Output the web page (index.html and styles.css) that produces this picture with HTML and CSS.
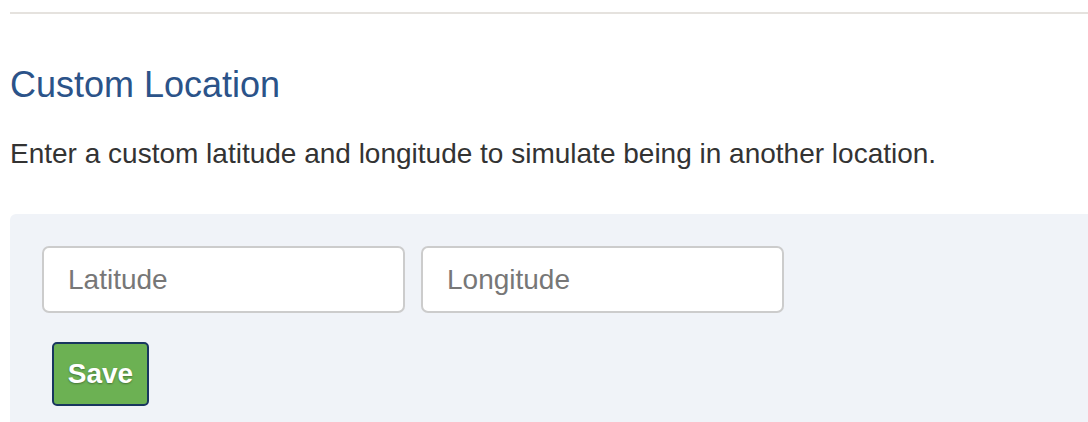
FILE: index.html
```html
<!DOCTYPE html>
<html>
<head>
<meta charset="utf-8">
<link rel="stylesheet" href="styles.css">
</head>
<body>
<div class="page">
  <hr class="rule">
  <h2 class="title">Custom Location</h2>
  <p class="lead">Enter a custom latitude and longitude to simulate being in another location.</p>
  <div class="panel">
    <div class="fields">
      <input class="field" type="text" placeholder="Latitude">
      <input class="field" type="text" placeholder="Longitude">
    </div>
    <button class="save" type="button">Save</button>
  </div>
</div>
</body>
</html>
```
FILE: styles.css
```css
html, body {
  margin: 0;
  padding: 0;
  background: #ffffff;
  font-family: "Liberation Sans", Arial, sans-serif;
}
.page {
  padding: 12px 0 0 10px;
  height: 410px;
  overflow: hidden;
}
.rule {
  margin: 0;
  border: 0;
  height: 2px;
  background: #e5e2de;
}
.title {
  margin: 51px 0 0;
  font-size: 36px;
  line-height: 40px;
  font-weight: normal;
  color: #2b5389;
}
.lead {
  margin: 29px 0 0;
  font-size: 28px;
  line-height: 40px;
  color: #333333;
}
.panel {
  margin-top: 40px;
  background: #f0f3f8;
  border-top-left-radius: 6px;
  padding: 32px 0 40px 32px;
  min-height: 200px;
}
.fields {
  display: flex;
  gap: 16px;
}
.field {
  box-sizing: border-box;
  width: 363px;
  height: 67px;
  margin: 0;
  border: 2px solid #cccccc;
  border-radius: 7px;
  background: #ffffff;
  padding: 0 24px;
  font-family: "Liberation Sans", Arial, sans-serif;
  font-size: 28px;
  color: #333333;
  outline: none;
}
.field::placeholder {
  color: #777777;
  opacity: 1;
}
.save {
  box-sizing: border-box;
  display: block;
  margin: 29px 0 0 10px;
  width: 97px;
  height: 64px;
  padding: 0;
  background: #6cb153;
  border: 2px solid #19365f;
  border-radius: 5px;
  color: #ffffff;
  font-family: "Liberation Sans", Arial, sans-serif;
  font-size: 28px;
  font-weight: bold;
  text-shadow: 0 1px 2px rgba(0, 0, 0, 0.35);
  cursor: pointer;
}
```
